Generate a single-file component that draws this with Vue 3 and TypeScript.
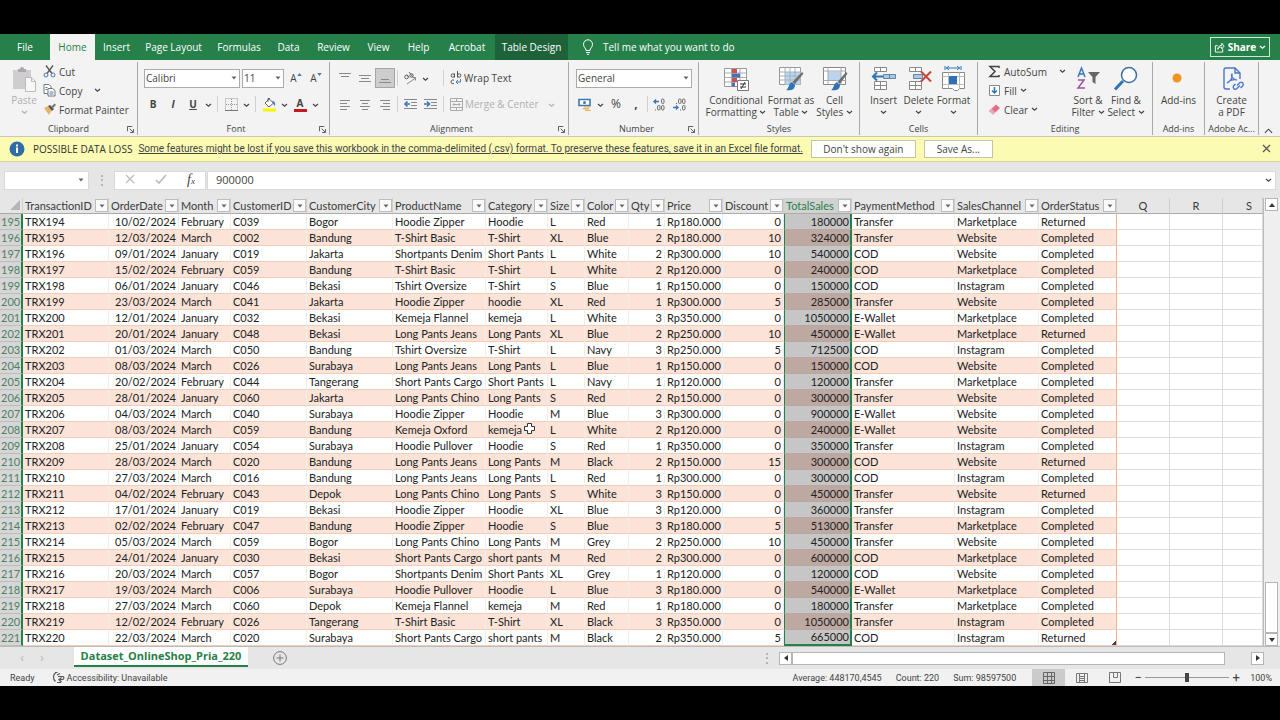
<script setup lang="ts">
import { h, ref } from 'vue'

interface Column {
  name: string
  right?: boolean
}

const tabs = ['File', 'Home', 'Insert', 'Page Layout', 'Formulas', 'Data', 'Review', 'View', 'Help', 'Acrobat', 'Table Design']

const columns: Column[] = [
  { name: 'TransactionID' },
  { name: 'OrderDate', right: true },
  { name: 'Month' },
  { name: 'CustomerID' },
  { name: 'CustomerCity' },
  { name: 'ProductName' },
  { name: 'Category' },
  { name: 'Size' },
  { name: 'Color' },
  { name: 'Qty', right: true },
  { name: 'Price' },
  { name: 'Discount', right: true },
  { name: 'TotalSales', right: true },
  { name: 'PaymentMethod' },
  { name: 'SalesChannel' },
  { name: 'OrderStatus' },
]
const selectedColumn = 12

const source = `10/02/2024|February|C039|Bogor|Hoodie Zipper|Hoodie|L|Red|1|Rp180.000|0|180000|Transfer|Marketplace|Returned
12/03/2024|March|C002|Bandung|T-Shirt Basic|T-Shirt|XL|Blue|2|Rp180.000|10|324000|Transfer|Website|Completed
09/01/2024|January|C019|Jakarta|Shortpants Denim|Short Pants|L|White|2|Rp300.000|10|540000|COD|Website|Completed
15/02/2024|February|C059|Bandung|T-Shirt Basic|T-Shirt|L|White|2|Rp120.000|0|240000|COD|Marketplace|Completed
06/01/2024|January|C046|Bekasi|Tshirt Oversize|T-Shirt|S|Blue|1|Rp150.000|0|150000|COD|Instagram|Completed
23/03/2024|March|C041|Jakarta|Hoodie Zipper|hoodie|XL|Red|1|Rp300.000|5|285000|Transfer|Website|Completed
12/01/2024|January|C032|Bekasi|Kemeja Flannel|kemeja|L|White|3|Rp350.000|0|1050000|E-Wallet|Marketplace|Completed
20/01/2024|January|C048|Bekasi|Long Pants Jeans|Long Pants|XL|Blue|2|Rp250.000|10|450000|E-Wallet|Marketplace|Returned
01/03/2024|March|C050|Bandung|Tshirt Oversize|T-Shirt|L|Navy|3|Rp250.000|5|712500|COD|Instagram|Completed
08/03/2024|March|C026|Surabaya|Long Pants Jeans|Long Pants|L|Blue|1|Rp150.000|0|150000|COD|Website|Completed
20/02/2024|February|C044|Tangerang|Short Pants Cargo|Short Pants|L|Navy|1|Rp120.000|0|120000|Transfer|Marketplace|Completed
28/01/2024|January|C060|Jakarta|Long Pants Chino|Long Pants|S|Red|2|Rp150.000|0|300000|Transfer|Website|Completed
04/03/2024|March|C040|Surabaya|Hoodie Zipper|Hoodie|M|Blue|3|Rp300.000|0|900000|E-Wallet|Website|Completed
08/03/2024|March|C059|Bandung|Kemeja Oxford|kemeja|L|White|2|Rp120.000|0|240000|E-Wallet|Website|Completed
25/01/2024|January|C054|Surabaya|Hoodie Pullover|Hoodie|S|Red|1|Rp350.000|0|350000|Transfer|Instagram|Completed
28/03/2024|March|C020|Bandung|Long Pants Jeans|Long Pants|M|Black|2|Rp150.000|15|300000|COD|Website|Returned
27/03/2024|March|C016|Bandung|Long Pants Jeans|Long Pants|L|Red|1|Rp300.000|0|300000|COD|Instagram|Completed
04/02/2024|February|C043|Depok|Long Pants Chino|Long Pants|S|White|3|Rp150.000|0|450000|Transfer|Website|Returned
17/01/2024|January|C019|Bekasi|Hoodie Zipper|Hoodie|XL|Blue|3|Rp120.000|0|360000|Transfer|Instagram|Completed
02/02/2024|February|C047|Bandung|Hoodie Zipper|Hoodie|S|Blue|3|Rp180.000|5|513000|Transfer|Marketplace|Completed
05/03/2024|March|C059|Bogor|Long Pants Chino|Long Pants|M|Grey|2|Rp250.000|10|450000|Transfer|Website|Completed
24/01/2024|January|C030|Bekasi|Short Pants Cargo|short pants|M|Red|2|Rp300.000|0|600000|COD|Marketplace|Completed
20/03/2024|March|C057|Bogor|Shortpants Denim|Short Pants|XL|Grey|1|Rp120.000|0|120000|COD|Website|Completed
19/03/2024|March|C006|Surabaya|Hoodie Pullover|Hoodie|L|Blue|3|Rp180.000|0|540000|E-Wallet|Marketplace|Completed
27/03/2024|March|C060|Depok|Kemeja Flannel|kemeja|M|Red|1|Rp180.000|0|180000|Transfer|Marketplace|Completed
12/02/2024|February|C026|Tangerang|T-Shirt Basic|T-Shirt|XL|Black|3|Rp350.000|0|1050000|Transfer|Instagram|Completed
22/03/2024|March|C020|Surabaya|Short Pants Cargo|short pants|M|Black|2|Rp350.000|5|665000|COD|Instagram|Returned`

const rows = source.split('\n').map((line, i) => ({
  number: 195 + i,
  cells: [`TRX${194 + i}`, ...line.split('|')],
}))

const fontName = ref('Calibri')
const fontSize = ref('11')
const numberFormat = ref('General')
const nameBox = ref('')
const formula = ref('900000')
const zoomLevel = ref(50)

const Chevron = () =>
  h('svg', { class: 'chev', viewBox: '0 0 7 5' }, [h('path', { d: 'M1 1l2.5 2.3L6 1', fill: 'none', stroke: 'currentColor', 'stroke-width': 1.2 })])
const Arrow = () => h('svg', { class: 'arrow', viewBox: '0 0 6 4' }, [h('path', { d: 'M.5.5h5L3 3.5z', fill: 'currentColor' })])
const Launcher = () =>
  h('svg', { class: 'launcher', viewBox: '0 0 8 8' }, [h('path', { d: 'M.5 6V.5H6M3 3l4 4M7.500 3.500v4h-4', fill: 'none', stroke: 'currentColor' })])

const linePaths: Record<string, string> = {
  top: 'M1 2.500h12M3 5.500h8',
  middle: 'M1 4.500h12M3 7.500h8M1 10.500h12',
  bottom: 'M3 8.500h8M1 11.500h12',
  left: 'M2 3.500h10M2 6.500h7M2 9.500h10M2 12.500h7',
  center: 'M2 3.500h10M4 6.500h6M2 9.500h10M4 12.500h6',
  right: 'M2 3.500h10M5 6.500h7M2 9.500h10M5 12.500h7',
}
const Lines = (props: { kind: string }) =>
  h('svg', { viewBox: '0 0 14 15', width: 14, height: 15 }, [h('path', { d: linePaths[props.kind], fill: 'none', stroke: '#888' })])
Lines.props = ['kind']
</script>

<template>
  <div class="screen">
    <header class="tabbar">
      <nav class="tabs" aria-label="Ribbon tabs">
        <button v-for="t in tabs" :key="t" :class="{ active: t === 'Home', context: t === 'Table Design' }">{{ t }}</button>
      </nav>
      <button class="tellme">
        <svg viewBox="0 0 12 16" width="12" height="16" fill="none" stroke="#fff"><path d="M4 11.500C4 9 1.500 8.500 1.500 5.300a4.500 4.500 0 019 0C10.500 8.500 8 9 8 11.500zM4 13.500h4M5 15.300h2" /></svg>
        Tell me what you want to do
      </button>
      <button class="share">
        <svg viewBox="0 0 12 12" width="11" height="11" fill="none" stroke="#fff"><path d="M4 4H1.500v7h8V7.500M4 8c.3-3 2-4.300 4.500-4.300V1.300L11 4.500 8.500 7.500V5.500C6.500 5.500 5 6 4 8z" /></svg>
        Share <Chevron />
      </button>
    </header>

    <section class="ribbon">
      <div class="group g-clip">
        <div class="body">
          <button class="big dim">
            <svg viewBox="0 0 26 26" width="26" height="26"><path d="M2 4h18v19H2z" fill="#cfcdd0" /><path d="M7 6V3h2a2 2 0 014 0h2v3z" fill="#aaa8ab" /><path d="M14.500 11.500h6l4 4v10h-10z" fill="#f7f7f7" stroke="#bbb" /><path d="M20.500 11.500v4h4" fill="none" stroke="#bbb" /></svg>
            <span>Paste</span><Chevron />
          </button>
          <div class="stack">
            <button>
              <svg viewBox="0 0 13 13" width="13" height="13" fill="none"><path d="M3 .5l6 8M10 .5l-6 8" stroke="#555" stroke-width="1.300" /><circle cx="3" cy="10" r="2" stroke="#4a7cb0" /><circle cx="10" cy="10" r="2" stroke="#4a7cb0" /></svg>Cut
            </button>
            <button>
              <svg viewBox="0 0 13 13" width="13" height="13" fill="#fff" stroke="#777"><path d="M1 .5h5l2 2v7H1z" /><path d="M5 4.500h4.500l2.500 2V12H5z" /><path d="M6.500 8h4M6.500 10h4M2.500 3.500h2M2.500 5.500h2" stroke="#4a7cb0" /></svg>Copy<Chevron class="far" />
            </button>
            <button>
              <svg viewBox="0 0 13 13" width="13" height="13"><path d="M1 5l4-2 4 4-3 5z" fill="#e3b566" /><path d="M5 3l2-1 4 4-2 2z" fill="#555" /><path d="M8.500 3.500l3-3 1.500 1.500-3 3z" fill="#777" /></svg>Format Painter
            </button>
          </div>
        </div>
        <footer>Clipboard<Launcher /></footer>
      </div>

      <div class="group g-font">
        <div class="rows">
          <div class="row">
            <label class="combo w-font"><select v-model="fontName" aria-label="Font"><option>Calibri</option></select><Arrow /></label>
            <label class="combo w-size"><select v-model="fontSize" aria-label="Font size"><option>11</option></select><Arrow /></label>
            <button class="ic grow" aria-label="Increase font size">A<svg viewBox="0 0 6 4" width="5" height="3"><path d="M3 0l3 4H0z" fill="#4a7cb0" /></svg></button>
            <button class="ic grow" aria-label="Decrease font size">A<svg viewBox="0 0 6 4" width="5" height="3"><path d="M0 0h6L3 4z" fill="#4a7cb0" /></svg></button>
          </div>
          <div class="row">
            <button class="ic"><b>B</b></button>
            <button class="ic"><b><i>I</i></b></button>
            <button class="ic"><b><u>U</u></b></button>
            <button class="drop" aria-label="Underline options"><Chevron /></button>
            <span class="sep"></span>
            <button class="ic" aria-label="Borders"><svg viewBox="0 0 13 13" width="13" height="13" fill="none" stroke="#999" stroke-dasharray="1 1"><path d="M.5.5h12v12H.5zM6.500 1v11M1 6.500h11" /><path d="M0 12.500h13" stroke-dasharray="none" stroke="#777" /></svg></button>
            <button class="drop" aria-label="Border options"><Chevron /></button>
            <span class="sep"></span>
            <button class="ic" aria-label="Fill color"><svg viewBox="0 0 15 15" width="15" height="15"><path d="M3 6l4-4 4.500 4-4.500 4z" fill="#fff" stroke="#666" /><path d="M6 5V1.500h2" fill="none" stroke="#666" /><path d="M10 4c3 0 3.500 2 3 5-1-.5-1.500-2-3-5z" fill="#4a7cb0" /><path d="M1 11.500h13v3H1z" fill="#f6f600" /></svg></button>
            <button class="drop" aria-label="Fill options"><Chevron /></button>
            <button class="ic fontcolor" aria-label="Font color"><b>A</b></button>
            <button class="drop" aria-label="Font color options"><Chevron /></button>
          </div>
        </div>
        <footer>Font<Launcher /></footer>
      </div>

      <div class="group g-align">
        <div class="rows">
          <div class="row">
            <button class="ic" aria-label="Top align"><Lines kind="top" /></button>
            <button class="ic" aria-label="Middle align"><Lines kind="middle" /></button>
            <button class="ic pressed" aria-label="Bottom align"><Lines kind="bottom" /></button>
            <span class="sep"></span>
            <button class="ic" aria-label="Orientation"><svg viewBox="0 0 14 14" width="14" height="14" fill="none" stroke="#666"><circle cx="3.500" cy="6" r="1.800" /><path d="M4 3.500l2 3M6 1l4 5" /><circle cx="8.500" cy="4.500" r="1.700" /><path d="M4 13l8.500-6M9.500 6.500h3v3" stroke="#888" /></svg></button>
            <button class="drop tight" aria-label="Orientation options"><Chevron /></button>
            <span class="sep gap"></span>
            <button class="txt"><svg viewBox="0 0 12 14" width="12" height="14" fill="none" stroke="#555"><circle cx="2.800" cy="4.500" r="1.700" /><path d="M4.500 2.500v4M7.500 0v6.500" /><circle cx="9.200" cy="4.500" r="1.700" /><path d="M4 9.200C2 8.500 1 9.500 1 11s1.500 2 3 1.500" /><path d="M10.500 8v3H6M8 9l-2 2 2 2" stroke="#4a7cb0" /></svg>Wrap Text</button>
          </div>
          <div class="row">
            <button class="ic" aria-label="Align left"><Lines kind="left" /></button>
            <button class="ic" aria-label="Center"><Lines kind="center" /></button>
            <button class="ic" aria-label="Align right"><Lines kind="right" /></button>
            <span class="sep"></span>
            <button class="ic" aria-label="Decrease indent"><svg viewBox="0 0 13 12" width="13" height="12"><path d="M0 1.500h13M7 4.500h6M7 7.500h6M0 10.500h13" stroke="#888" /><path d="M6 6H1M3.500 3.500L1 6l2.500 2.500" fill="none" stroke="#3d77b5" stroke-width="1.600" /></svg></button>
            <button class="ic" aria-label="Increase indent"><svg viewBox="0 0 13 12" width="13" height="12"><path d="M0 1.500h13M7 4.500h6M7 7.500h6M0 10.500h13" stroke="#888" /><path d="M0 6h5M3 3.500L5.500 6 3 8.500" fill="none" stroke="#3d77b5" stroke-width="1.600" /></svg></button>
            <span class="sep tail"></span>
            <button class="txt dim"><svg viewBox="0 0 13 13" width="13" height="13" fill="none" stroke="#aaa"><path d="M.5.5h12v12H.5zM.5 3.500h12M.5 9.500h12M6.500.5v3M6.500 9.500v3M3 6.500h7M4.500 5L3 6.500 4.500 8M8.500 5L10 6.500 8.500 8" /></svg>Merge &amp; Center</button>
            <button class="drop dim last" aria-label="Merge options"><Chevron /></button>
          </div>
        </div>
        <footer>Alignment<Launcher /></footer>
      </div>

      <div class="group g-num">
        <div class="rows">
          <div class="row">
            <label class="combo w-num"><select v-model="numberFormat" aria-label="Number format"><option>General</option></select><Arrow /></label>
          </div>
          <div class="row">
            <button class="ic" aria-label="Accounting format"><svg viewBox="0 0 14 13" width="14" height="13"><path d="M1 1.500h11v6H1z" fill="#fff" stroke="#3d77b5" stroke-width="1.600" /><circle cx="6.500" cy="4.500" r="1.500" fill="#3d77b5" /><path d="M6 8h6v1.500H6zM5 10h6v1.500H5zM7 12h6v1H7z" fill="#e3b566" /></svg></button>
            <button class="drop" aria-label="Accounting options"><Chevron /></button>
            <button class="ic pct">%</button>
            <button class="ic pct"><b>,</b></button>
            <span class="sep"></span>
            <button class="ic" aria-label="Increase decimal"><svg viewBox="0 0 13 13" width="13" height="13" fill="none" stroke="#666"><path d="M6 3.500H1M3 1.500l-2 2 2 2" stroke="#3d77b5" stroke-width="1.400" /><rect x="8.500" y="1" width="2.500" height="4.500" rx="1.200" /><rect x="4.500" y="7.500" width="2.500" height="4.500" rx="1.200" /><rect x="8.500" y="7.500" width="2.500" height="4.500" rx="1.200" /><path d="M2 12h1" /></svg></button>
            <button class="ic" aria-label="Decrease decimal"><svg viewBox="0 0 13 13" width="13" height="13" fill="none" stroke="#666"><path d="M0 9.500h5M3 7.500l2 2-2 2" stroke="#3d77b5" stroke-width="1.400" /><rect x="5.500" y="1" width="2.500" height="4.500" rx="1.200" /><rect x="9.500" y="1" width="2.500" height="4.500" rx="1.200" /><rect x="9.500" y="7.500" width="2.500" height="4.500" rx="1.200" /><path d="M3 5.500h1M7 12h1" /></svg></button>
          </div>
        </div>
        <footer>Number<Launcher /></footer>
      </div>

      <div class="group g-styles">
        <div class="body">
          <button class="big">
            <svg viewBox="0 0 26 26" width="26" height="26"><path d="M1.500 2.500h22v18h-22z" fill="#fff" stroke="#999" /><path d="M1.500 7h22M1.500 11.500h22M1.500 16h22M8.500 2.500v18M17 2.500v18" stroke="#aaa" fill="none" /><path d="M9 3h5v4H9zM9 12h5v4H9z" fill="#d2504c" /><path d="M9 7.500h8v4H9zM9 16.500h3v4H9z" fill="#4472b5" /><path d="M14.500 14.500h11v10h-11z" fill="#fff" stroke="#777" /><path d="M17 18h6M17 21h6M22 16l-4 7" stroke="#333" fill="none" /></svg>
            <span>Conditional</span><span>Formatting <Chevron /></span>
          </button>
          <button class="big">
            <svg viewBox="0 0 26 26" width="26" height="26"><path d="M1.500 1.500h21v17h-21z" fill="#fff" stroke="#999" /><path d="M7 6h15.500v12.500H7z" fill="#bcd5ee" /><path d="M1.500 6h21M1.500 10h21M1.500 14h21M7 1.500v17M12 1.500v17M17 1.500v17" stroke="#a5b1bd" fill="none" /><path d="M25.500 7.500L17 18l-2.500-2L24 6z" fill="#6e6e6e" /><path d="M14 16l3 3c0 5-5 6-9 5 3-1 2-6 6-8z" fill="#2f75b5" /></svg>
            <span>Format as</span><span>Table <Chevron /></span>
          </button>
          <button class="big">
            <svg viewBox="0 0 26 26" width="26" height="26"><path d="M1.500 1.500h22v17h-22z" fill="#fff" stroke="#888" /><path d="M6 5.500h13v9H6z" fill="#bcd5ee" /><path d="M1.500 5h22M1.500 14.500h22M6 1.500v17M19 1.500v17" stroke="#aaa" fill="none" /><path d="M25.500 7.500L18 18l-2.500-2L24 6z" fill="#6e6e6e" /><path d="M15 16l3 3c0 5-5 6-9 5 3-1 2-6 6-8z" fill="#2f75b5" /></svg>
            <span>Cell</span><span>Styles <Chevron /></span>
          </button>
        </div>
        <footer>Styles</footer>
      </div>

      <div class="group g-cells">
        <div class="body">
          <button class="big">
            <svg viewBox="0 0 26 26" width="26" height="26"><path d="M3.500 1.500h12v4h-12zM9.500 1.500v4M3.500 15.500h12v8h-12zM9.500 15.500v8M3.500 19.500h12" fill="#fff" stroke="#888" /><path d="M12.500 8.500h12v4h-12z" fill="#a9c8e6" stroke="#6484a5" /><path d="M18.500 8.500v4" stroke="#6484a5" /><path d="M12 10.500H2M6 6.500l-4 4 4 4" fill="none" stroke="#2f75b5" stroke-width="2" /></svg>
            <span>Insert</span><Chevron />
          </button>
          <button class="big">
            <svg viewBox="0 0 26 26" width="26" height="26"><path d="M3.500 1.500h12v4h-12zM9.500 1.500v4M3.500 15.500h12v8h-12zM9.500 15.500v8M3.500 19.500h12" fill="#fff" stroke="#888" /><path d="M7.500 8.500h9v4h-9z" fill="#a9c8e6" stroke="#6484a5" /><path d="M15 5.500l10 10M25 5.500l-10 10" fill="none" stroke="#cc4036" stroke-width="2" /></svg>
            <span>Delete</span><Chevron />
          </button>
          <button class="big">
            <svg viewBox="0 0 26 26" width="26" height="26"><path d="M4 0v4M20 0v4M5 2h14M8 0L5.500 2 8 4M16 0l2.500 2L16 4" stroke="#2f75b5" fill="none" /><path d="M1.500 6.500h22v16h-5l-2 2h-3l-2-2h-10z" fill="#fff" stroke="#888" /><path d="M1.500 10.500h22M1.500 18.500h22M7.500 6.500v16M18.500 6.500v16" stroke="#bbb" fill="none" /><path d="M8 10h8v8H8z" fill="#2f6fb5" /></svg>
            <span>Format</span><Chevron />
          </button>
        </div>
        <footer>Cells</footer>
      </div>

      <div class="group g-edit">
        <div class="body">
          <div class="stack">
            <button><svg viewBox="0 0 13 13" width="13" height="13"><path d="M11 3V1.500H2L7 6.500 2 11.500h9V10" fill="none" stroke="#444" stroke-width="1.500" /></svg>AutoSum<Chevron class="far" /></button>
            <button><svg viewBox="0 0 13 13" width="13" height="13"><path d="M1.500 1.500h10v10h-10z" fill="#fff" stroke="#888" /><path d="M6.500 3v6M4 6.500L6.500 9 9 6.500" fill="none" stroke="#2f75b5" stroke-width="1.500" /></svg>Fill <Chevron /></button>
            <button><svg viewBox="0 0 13 13" width="13" height="13"><path d="M1 8l7-6.500L12 5l-7 6.500z" fill="#e0708a" /><path d="M1 8l2.500-2.300 4 3.500L5 11.500z" fill="#f0a5b5" /></svg>Clear <Chevron /></button>
          </div>
          <button class="big">
            <svg viewBox="0 0 26 26" width="26" height="26" fill="none"><path d="M3 11L6.500 2 10 11M4 8h5" stroke="#3d77b5" stroke-width="1.500" /><path d="M3 14h6L3 22h7" stroke="#9b52a5" stroke-width="1.500" /><path d="M13 6h12l-4.500 5v7l-3-2v-5z" fill="#666" /></svg>
            <span>Sort &amp;</span><span>Filter <Chevron /></span>
          </button>
          <button class="big">
            <svg viewBox="0 0 26 26" width="26" height="26" fill="none"><path d="M10 15l-8 8.500" stroke="#2f75b5" stroke-width="3" /><circle cx="16" cy="9" r="7.500" fill="#fff" stroke="#3d6f9f" stroke-width="1.500" /></svg>
            <span>Find &amp;</span><span>Select <Chevron /></span>
          </button>
        </div>
        <footer>Editing</footer>
      </div>

      <div class="group g-add">
        <div class="body">
          <button class="big">
            <svg viewBox="0 0 26 26" width="26" height="26"><circle cx="12" cy="12" r="4.500" fill="#ef9420" /></svg>
            <span>Add-ins</span>
          </button>
        </div>
        <footer>Add-ins</footer>
      </div>

      <div class="group g-pdf">
        <div class="body">
          <button class="big">
            <svg viewBox="0 0 26 26" width="26" height="26" fill="none" stroke="#4b78c8" stroke-width="1.400"><path d="M11 23H7a2 2 0 01-2-2V4a2 2 0 012-2h9l5 5v6M16 2v5h5" /><path d="M8 17c4-2 6-6 5-9-2 1 1 6 5 6-4-1-8 1-10 3z" stroke-width="1.200" /><path d="M18 19.500l3-3a2.200 2.200 0 013 3l-2.500 2.500M21 19.500l-3.500 3.500a2.200 2.200 0 01-3-3l2-2" /></svg>
            <span>Create</span><span>a PDF</span>
          </button>
        </div>
        <footer>Adobe Ac...</footer>
      </div>
      <button class="collapse" aria-label="Collapse the ribbon"><svg viewBox="0 0 10 6" width="9" height="6"><path d="M1 5l4-4 4 4" fill="none" stroke="#444" stroke-width="1.200" /></svg></button>
    </section>

    <aside class="warning">
      <svg viewBox="0 0 16 16" width="16" height="16"><circle cx="8" cy="8" r="7.500" fill="#2f6ca8" /><path d="M7 6.500h2V12H7zM7 3.500h2v2H7z" fill="#fff" /></svg>
      <strong>POSSIBLE DATA LOSS</strong>
      <a href="#">Some features might be lost if you save this workbook in the comma-delimited (.csv) format. To preserve these features, save it in an Excel file format.</a>
      <button class="act wide">Don't show again</button>
      <button class="act">Save As...</button>
      <button class="close" aria-label="Close message"><svg viewBox="0 0 9 9" width="9" height="9"><path d="M1 1l7 7M8 1L1 8" stroke="#555" stroke-width="1.200" /></svg></button>
    </aside>

    <div class="fbar">
      <label class="namebox"><input v-model="nameBox" aria-label="Name box" /><Arrow /></label>
      <span class="dots">⋮</span>
      <div class="fx">
        <button aria-label="Cancel"><svg viewBox="0 0 10 10" width="10" height="10"><path d="M1 1l8 8M9 1L1 9" stroke="#bbb" stroke-width="1.300" /></svg></button>
        <button aria-label="Enter"><svg viewBox="0 0 12 10" width="12" height="10"><path d="M1 6l3 3 7-8" fill="none" stroke="#bbb" stroke-width="1.700" /></svg></button>
        <button class="fn" aria-label="Insert function"><i>f<small>x</small></i></button>
      </div>
      <label class="formula"><input v-model="formula" aria-label="Formula" /><Chevron /></label>
    </div>

    <main class="sheet">
      <div class="gridwrap">
        <table>
          <colgroup>
            <col class="c-n" /><col class="c-id" /><col class="c-date" /><col class="c-month" /><col class="c-cust" /><col class="c-city" /><col class="c-prod" /><col class="c-cat" /><col class="c-size" /><col class="c-color" /><col class="c-qty" /><col class="c-price" /><col class="c-disc" /><col class="c-total" /><col class="c-pay" /><col class="c-chan" /><col class="c-stat" /><col class="c-q" /><col class="c-q" /><col />
          </colgroup>
          <thead>
            <tr>
              <th class="corner"><svg viewBox="0 0 10 10" width="10" height="10"><path d="M10 0v10H0z" fill="#b5b5b5" /></svg></th>
              <th v-for="(c, i) in columns" :key="c.name" :class="{ sel: i === selectedColumn }">
                <div class="hcell"><span>{{ c.name }}</span><button :aria-label="'Filter ' + c.name"><Arrow /></button></div>
              </th>
              <th class="plain">Q</th>
              <th class="plain">R</th>
              <th class="plain cut">S</th>
            </tr>
          </thead>
          <tbody>
            <tr v-for="r in rows" :key="r.number" :class="{ band: r.number % 2 === 0 }">
              <th>{{ r.number }}</th>
              <td v-for="(v, i) in r.cells" :key="i" :class="{ right: columns[i].right, sel: i === selectedColumn, end: i === 15 }">{{ v }}</td>
              <td class="empty"></td>
              <td class="empty"></td>
              <td class="empty"></td>
            </tr>
          </tbody>
        </table>
        <svg class="cursor" viewBox="0 0 11 11" width="11" height="11"><path d="M3.500.5h4v3h3v4h-3v3h-4v-3h-3v-4h3z" fill="#fff" stroke="#333" /></svg>
      </div>
      <div class="vscroll">
        <button aria-label="Scroll up"><svg viewBox="0 0 6 4" width="6" height="4"><path d="M3 0l3 4H0z" fill="#333" /></svg></button>
        <span class="vthumb"></span>
        <button aria-label="Scroll down"><svg viewBox="0 0 6 4" width="6" height="4"><path d="M0 0h6L3 4z" fill="#333" /></svg></button>
      </div>
    </main>

    <div class="sheetbar">
      <button class="nav" aria-label="Previous sheet">‹</button>
      <button class="nav" aria-label="Next sheet">›</button>
      <button class="sheettab">Dataset_OnlineShop_Pria_220</button>
      <button class="add" aria-label="New sheet"><svg viewBox="0 0 14 14" width="14" height="14" fill="none" stroke="#777"><circle cx="7" cy="7" r="6.400" /><path d="M7 3.500v7M3.500 7h7" /></svg></button>
      <span class="dots">⋮</span>
      <div class="hscroll">
        <button aria-label="Scroll left"><svg viewBox="0 0 4 6" width="4" height="6"><path d="M4 0v6L0 3z" fill="#333" /></svg></button>
        <span class="hthumb"></span>
        <button aria-label="Scroll right"><svg viewBox="0 0 4 6" width="4" height="6"><path d="M0 0v6l4-3z" fill="#333" /></svg></button>
      </div>
    </div>

    <footer class="status">
      <span class="ready">Ready</span>
      <svg viewBox="0 0 13 13" width="13" height="13" fill="none" stroke="#555" stroke-width="1.200"><path d="M4 1.500C1 3 .5 8 3.500 10.500M3 1.500h2.500M5 4l3-1.500M6 5.500h5c1.500 1 1 3-1 3H7M9.500 6.500L7 8.500l2.500 2.500M5 11.500h4" /></svg>
      <span>Accessibility: Unavailable</span>
      <span class="stats"><span>Average: 448170,4545</span><span>Count: 220</span><span>Sum: 98597500</span></span>
      <button class="view on" aria-label="Normal view"><svg viewBox="0 0 12 12" width="12" height="12" fill="none" stroke="#666"><path d="M.5.5h11v11H.5zM4.500 0v12M8.500 0v12M0 4.500h12M0 8.500h12" /></svg></button>
      <button class="view" aria-label="Page layout view"><svg viewBox="0 0 12 12" width="12" height="12" fill="none" stroke="#777"><path d="M.5 1.500h11v9H.5zM3.500 1.500v9M8.500 1.500v9M4 4.500h4M4 6.500h4M4 8.500h4" /></svg></button>
      <button class="view" aria-label="Page break preview"><svg viewBox="0 0 12 12" width="12" height="12" fill="none" stroke="#777"><path d="M.5.500v10h11V.5zM4.500.5v5h4v-5" /></svg></button>
      <button class="pm" aria-label="Zoom out">−</button>
      <input v-model="zoomLevel" class="slider" type="range" min="0" max="100" aria-label="Zoom" />
      <button class="pm" aria-label="Zoom in">+</button>
      <span class="percent">100%</span>
    </footer>
  </div>
</template>

<style>
html,
body {
  background: #000;
}
</style>

<style scoped>
* {
  box-sizing: border-box;
}
.screen {
  width: 100%;
  min-height: 100vh;
  padding: 34px 0;
  background: #000;
  display: flex;
  flex-direction: column;
  font-family: 'Open Sans', 'Noto Sans', sans-serif;
  font-size: 10px;
  line-height: 12px;
  color: #444;
}
button,
input,
select {
  font: inherit;
  color: inherit;
  border: 0;
  background: none;
  padding: 0;
  margin: 0;
  border-radius: 0;
  outline: none;
  white-space: nowrap;
}
svg {
  flex: none;
}
.chev {
  width: 7px;
  height: 5px;
  vertical-align: middle;
}
.arrow {
  width: 6px;
  height: 4px;
  color: #666;
}

/* Tabs */
.tabbar {
  height: 26px;
  background: #26804a;
  display: flex;
  align-items: center;
  color: #fff;
}
.tabs {
  display: grid;
  grid-template-columns: 50px 45px 43px 71px 60px 39px 51px 39px 41px 56px 73px;
  height: 26px;
}
.tabs .active {
  background: #f3f3f3;
  color: #26804a;
}
.tabs .context {
  background: #1e6239;
}
.tellme {
  display: flex;
  align-items: center;
  gap: 9px;
  margin-left: 14px;
}
.share {
  margin-left: auto;
  margin-right: 10px;
  width: 60px;
  height: 20px;
  border: 1px solid #cfe5d7;
  display: flex;
  align-items: center;
  justify-content: center;
  gap: 3px;
  font-weight: 700;
}

/* Ribbon */
.ribbon {
  height: 77px;
  background: #f3f3f3;
  border-bottom: 1px solid #c9c9b0;
  display: flex;
  padding-top: 2px;
}
.group {
  flex: none;
  height: 73px;
  border-right: 1px solid #a8a8a8;
  display: flex;
  flex-direction: column;
}
.g-clip { width: 138px; }
.g-font { width: 192px; padding-left: 5px; }
.g-align { width: 239px; padding-left: 5px; }
.g-num { width: 130px; padding-left: 6px; }
.g-styles { width: 161px; }
.g-cells { width: 118px; }
.g-edit { width: 175px; }
.g-add { width: 52px; }
.g-pdf { width: 54px; }
.group footer {
  height: 12px;
  text-align: center;
  font-size: 9px;
  position: relative;
  white-space: nowrap;
}
.launcher {
  position: absolute;
  right: 3px;
  top: 3px;
  width: 7px;
  height: 7px;
}
.body {
  height: 61px;
  display: flex;
  align-items: flex-start;
}
.big {
  display: flex;
  flex-direction: column;
  align-items: center;
  padding-top: 4px;
}
.big svg:first-child {
  margin-bottom: 2px;
}
.big > .chev {
  margin-top: 4px;
}
.dim {
  color: #b0b0b0;
}
.g-clip .big { width: 43px; padding-left: 5px; }
.g-styles .body { padding-left: 7px; }
.g-styles .big { width: 60px; }
.g-styles .big:nth-child(2) { width: 50px; }
.g-styles .big:nth-child(3) { width: 37px; }
.g-cells .body { padding-left: 6px; }
.g-cells .big { width: 35px; }
.g-edit .body { padding-left: 10px; }
.g-edit .stack { width: 81px; }
.g-edit .big { width: 38px; }
.g-add .body,
.g-pdf .body { justify-content: center; }
.stack {
  display: flex;
  flex-direction: column;
}
.stack button {
  height: 19px;
  display: flex;
  align-items: center;
  gap: 3px;
}
.far {
  margin-left: 9px;
}
.rows {
  height: 61px;
  padding-top: 6px;
  display: flex;
  flex-direction: column;
  gap: 6px;
}
.row {
  display: flex;
  align-items: center;
  height: 20px;
}
.combo {
  display: flex;
  align-items: center;
  height: 19px;
  border: 1px solid #ababab;
  background: #fff;
  margin-right: 2px;
  padding-right: 2px;
}
.combo select {
  appearance: none;
  flex: 1;
  min-width: 0;
  padding-left: 1px;
}
.w-font { width: 96px; margin-left: 1px; }
.w-size { width: 42px; }
.w-num { width: 116px; margin-left: 1px; }
.ic {
  width: 20px;
  height: 20px;
  display: flex;
  align-items: center;
  justify-content: center;
}
.grow svg {
  margin-bottom: 8px;
}
.drop {
  width: 11px;
}
.sep {
  width: 1px;
  height: 16px;
  margin: 0 3px;
  background: #d0d0d0;
}
.g-align .sep { margin: 0 2px; }
.g-align .sep.gap { margin: 0 6px 0 12px; }
.g-align .sep.tail { margin: 0 6px 0 3px; }
.g-num .sep { margin: 0 1px; }
.last { margin-left: auto; margin-right: 11px; }
.pressed {
  background: #cdcdcd;
  border: 1px solid #a5a5a5;
}
.txt {
  display: flex;
  align-items: center;
  gap: 2px;
}
.fontcolor b {
  width: 13px;
  line-height: 12px;
  border-bottom: 3px solid #c8181f;
}
.pct {
  font-size: 12px;
}
.collapse {
  align-self: flex-end;
  margin: 0 0 0 5px;
}

/* Message bar */
.warning {
  height: 25px;
  background: #fbfbb4;
  border-bottom: 1px solid #d5d59c;
  display: flex;
  align-items: center;
  padding: 0 9px;
  white-space: nowrap;
}
.warning strong {
  font-weight: 400;
  margin: 0 6px 0 8px;
  color: #333;
}
.warning a {
  font-family: Roboto, sans-serif;
  color: #444;
}
.act {
  height: 18px;
  width: 69px;
  border: 1px solid #c3c3a8;
  background: #fff;
  margin-left: 8px;
}
.act.wide {
  width: 105px;
}
.close {
  margin-left: auto;
}

/* Formula bar */
.fbar {
  height: 36px;
  background: #e6e6e6;
  display: flex;
  align-items: center;
  padding: 0 4px;
}
.namebox,
.fx,
.formula {
  height: 19px;
  background: #fff;
  border: 1px solid #d9d9d9;
  display: flex;
  align-items: center;
}
.namebox {
  width: 85px;
  padding-right: 4px;
}
.namebox input,
.formula input {
  flex: 1;
  min-width: 0;
}
.dots {
  width: 25px;
  text-align: center;
  color: #999;
  font-size: 12px;
}
.fx {
  width: 92px;
  justify-content: space-around;
}
.fn {
  font-family: 'Liberation Serif', serif;
  font-size: 14px;
}
.fn small {
  font-size: 9px;
}
.formula {
  flex: 1;
  margin-left: 1px;
  padding: 0 3px 0 8px;
  font-size: 11px;
}

/* Grid */
.sheet {
  display: flex;
  background: #e6e6e6;
}
.gridwrap {
  flex: 1;
  min-width: 0;
  position: relative;
  border-right: 1px solid #bbb;
}
table {
  width: 100%;
  table-layout: fixed;
  border-collapse: separate;
  border-spacing: 0;
  font-family: Lato, 'Open Sans', sans-serif;
  font-size: 11px;
  line-height: 14px;
  color: #222;
}
.c-n { width: 23px; }
.c-id { width: 86px; }
.c-date { width: 70px; }
.c-month { width: 52px; }
.c-cust { width: 76px; }
.c-city { width: 86px; }
.c-prod { width: 93px; }
.c-cat { width: 62px; }
.c-size { width: 37px; }
.c-color { width: 44px; }
.c-qty { width: 36px; }
.c-price { width: 58px; }
.c-disc { width: 61px; }
.c-total { width: 68px; }
.c-pay { width: 103px; }
.c-chan { width: 84px; }
.c-stat { width: 78px; }
.c-q { width: 53px; }
th,
td {
  height: 16px;
  padding: 0 2px;
  font-weight: 400;
  text-align: left;
  white-space: nowrap;
}
td {
  background: #fff;
  border-right: 1px solid #eee;
  border-bottom: 1px solid #f3cdb8;
}
thead th {
  background: #e6e6e6;
  border-bottom: 1px solid #ababab;
  border-right: 1px solid #cfcfcf;
  padding: 0 0 0 2px;
  color: #3b3b3b;
}
thead .corner {
  text-align: right;
  padding: 0 2px;
}
thead .plain {
  text-align: center;
  padding: 0;
}
thead .cut {
  padding-left: 13px;
}
thead .sel {
  background: #d2d2d2;
  color: #26804a;
}
.hcell {
  display: flex;
  align-items: center;
  height: 15px;
}
.hcell span {
  flex: 1;
}
.hcell button {
  flex: none;
  width: 13px;
  height: 13px;
  border: 1px solid #bdbdbd;
  background: #fafafa;
  display: flex;
  align-items: center;
  justify-content: center;
}
tbody th {
  background: #d6d6d6;
  border-right: 2px solid #26804a;
  border-bottom: 1px solid #bdbdbd;
  color: #4f7f63;
  padding: 0 0 0 1px;
}
.band td {
  background: #fbe3d7;
}
.right {
  text-align: right;
}
td.sel {
  background: #c6c6c6;
  border-left: 1px solid #26804a;
  border-right: 2px solid #26804a;
  border-bottom-color: #b9a69c;
  padding-right: 1px;
}
.band td.sel {
  background: #bda9a2;
}
tbody tr:last-child .sel {
  border-bottom: 2px solid #26804a;
}
td.end {
  border-right-color: #efb48e;
}
tbody tr:last-child .end {
  background: linear-gradient(135deg, transparent 50%, #444 50%) right bottom / 5px 5px no-repeat #fff;
}
tr td.empty {
  background: #fff;
  border-color: #dcdcdc;
}
.cursor {
  position: absolute;
  left: 524px;
  top: 225px;
}
.vscroll {
  width: 16px;
  display: flex;
  flex-direction: column;
  background: #efefef;
}
.vscroll button,
.hscroll button {
  width: 13px;
  height: 13px;
  background: #fff;
  border: 1px solid #b5b5b5;
  display: flex;
  align-items: center;
  justify-content: center;
}
.vscroll button {
  margin-left: 1px;
}
.vthumb {
  margin: auto 2px 0 1px;
  height: 51px;
  background: #fff;
  border: 1px solid #b5b5b5;
}

/* Sheet tabs */
.sheetbar {
  height: 23px;
  background: #e6e6e6;
  border-top: 1px solid #bbb;
  display: flex;
  align-items: center;
  padding-left: 12px;
}
.nav {
  width: 20px;
  color: #b5b5b5;
  font-size: 12px;
}
.sheettab {
  align-self: flex-start;
  margin-left: 22px;
  width: 174px;
  height: 20px;
  background: #fff;
  border-bottom: 2px solid #26804a;
  color: #26804a;
  font-weight: 700;
  font-size: 11px;
}
.add {
  display: flex;
  margin-left: 25px;
}
.sheetbar .dots {
  margin-left: auto;
}
.hscroll {
  flex: 0 1 485px;
  margin-right: 16px;
  display: flex;
}
.hthumb {
  flex: 1;
  margin-right: 26px;
  background: #fff;
  border: 1px solid #b5b5b5;
}

/* Status bar */
.status {
  height: 17px;
  background: #f1f1f1;
  display: flex;
  align-items: center;
  padding: 0 8px 0 10px;
  font-family: Roboto, sans-serif;
  font-size: 9px;
  white-space: nowrap;
}
.ready {
  margin-right: 17px;
}
.status > svg {
  margin-right: 2px;
}
.stats {
  margin-left: auto;
  display: flex;
  gap: 14px;
}
.view {
  width: 33px;
  height: 17px;
  display: flex;
  align-items: center;
  justify-content: center;
}
.on {
  background: #cbcbcb;
  margin-left: 16px;
}
.pm {
  width: 14px;
  font-size: 13px;
}
.slider {
  appearance: none;
  width: 84px;
  height: 12px;
  background: linear-gradient(#999, #999) center / 100% 1px no-repeat;
}
.slider::-webkit-slider-thumb {
  appearance: none;
  width: 4px;
  height: 9px;
  background: #444;
}
.percent {
  margin-left: 7px;
}
</style>
